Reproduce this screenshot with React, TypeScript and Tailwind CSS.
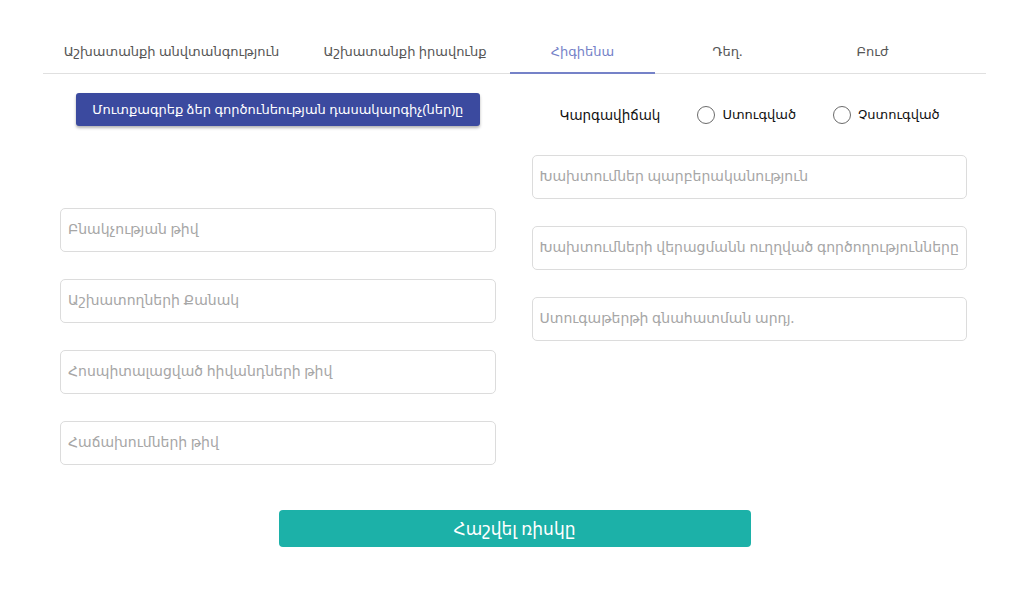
import React from 'react';

const tabs = [
  { label: 'Աշխատանքի անվտանգություն', w: 'w-[257px]' },
  { label: 'Աշխատանքի իրավունք', w: 'w-[210px]' },
  { label: 'Հիգիենա', w: 'w-[145px]', active: true },
  { label: 'Դեղ.', w: 'w-[145px]' },
  { label: 'Բուժ', w: 'w-[145px]' },
];

const leftFields = [
  'Բնակչության թիվ',
  'Աշխատողների Քանակ',
  'Հոսպիտալացված հիվանդների թիվ',
  'Հաճախումների թիվ',
];

const rightFields = [
  'Խախտումներ պարբերականություն',
  'Խախտումների վերացմանն ուղղված գործողությունները',
  'Ստուգաթերթի գնահատման արդյ.',
];

function Field({ placeholder }: { placeholder: string }) {
  return (
    <input
      placeholder={placeholder}
      className="w-full h-[44px] px-[7px] pb-[3px] rounded-[5px] border border-[#dcdcdc] bg-white text-[14px] text-[#333] placeholder:text-[#a6a6a6] outline-none"
    />
  );
}

function Radio({ label }: { label: string }) {
  return (
    <label className="flex items-center gap-[7px] cursor-pointer">
      <span className="w-[18px] h-[18px] rounded-full border-[1.5px] border-[#6b6b6b]" />
      <span className="text-[13px] text-[#111]">{label}</span>
    </label>
  );
}

export default function App() {
  return (
    <div className="w-[1024px] h-[597px] bg-white font-['Noto_Sans','DejaVu_Sans',sans-serif]">
      <div className="ml-[43px] w-[943px] pt-[30px]">
        <div className="flex border-b border-[#e0e0e0] h-[44px]">
          {tabs.map((t) => (
            <button
              key={t.label}
              className={`${t.w} flex items-center justify-center text-[13px] relative ${
                t.active ? 'text-[#7582c8]' : 'text-[#555]'
              }`}
            >
              {t.label}
              {t.active && <span className="absolute left-0 right-0 bottom-[-1px] h-[2px] bg-[#7582c8]" />}
            </button>
          ))}
        </div>

        <div className="grid grid-cols-2 gap-[36px] pl-[17px] pr-[19px]">
          <div className="flex flex-col">
            <button className="self-center mt-[19px] w-[404px] h-[33px] rounded-[3px] bg-[#3b4a9f] text-white text-[13px] shadow-[0_2px_3px_rgba(0,0,0,0.3)]">
              Մուտքագրեք ձեր գործունեության դասակարգիչ(ներ)ը
            </button>
            <div className="flex flex-col gap-[27px] mt-[82px]">
              {leftFields.map((f) => (
                <Field key={f} placeholder={f} />
              ))}
            </div>
          </div>
          <div className="flex flex-col">
            <div className="flex items-center h-[30px] mt-[26px] pl-[28px] gap-[37px]">
              <span className="text-[13.5px] text-[#111]">Կարգավիճակ</span>
              <Radio label="Ստուգված" />
              <Radio label="Չստուգված" />
            </div>
            <div className="flex flex-col gap-[27px] mt-[25px]">
              {rightFields.map((f) => (
                <Field key={f} placeholder={f} />
              ))}
            </div>
          </div>
        </div>

        <div className="flex justify-center mt-[45px]">
          <button className="w-[472px] h-[37px] rounded-[4px] bg-[#1cb1a8] text-white text-[17px]">
            Հաշվել ռիսկը
          </button>
        </div>
      </div>
    </div>
  );
}
